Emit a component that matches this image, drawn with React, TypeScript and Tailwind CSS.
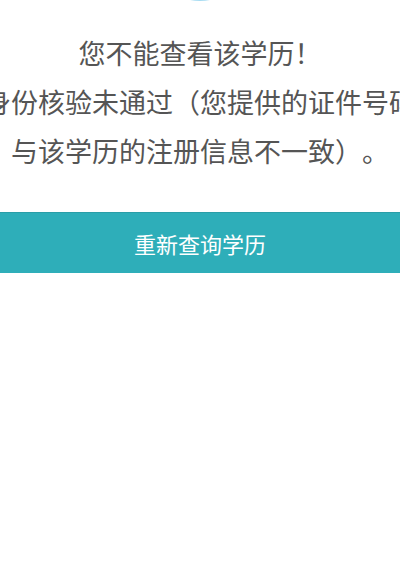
export default function App() {
  return (
    <div
      className="relative h-[567px] w-[400px] overflow-hidden bg-white [text-spacing-trim:space-all]"
      style={{ fontFamily: '"Noto Sans CJK SC", "Noto Sans", sans-serif' }}
    >
      {/* status icon, mostly scrolled out of view */}
      <div className="flex justify-center">
        <div className="-mt-[99px] h-[100px] w-[100px] rounded-full bg-[#a8dcf2]" />
      </div>

      {/* message */}
      <div className="mt-[27px] flex flex-col items-center whitespace-nowrap text-[27px] leading-[49px] text-[#555]">
        <p>您不能查看该学历！</p>
        <p>身份核验未通过（您提供的证件号码</p>
        <p>与该学历的注册信息不一致）。</p>
      </div>

      {/* retry button */}
      <button className="mt-[37px] flex h-[61px] w-full items-center justify-center border-t border-[#2a9ea8] bg-[#2eaeb9] text-[22px] text-white">
        重新查询学历
      </button>
    </div>
  );
}
